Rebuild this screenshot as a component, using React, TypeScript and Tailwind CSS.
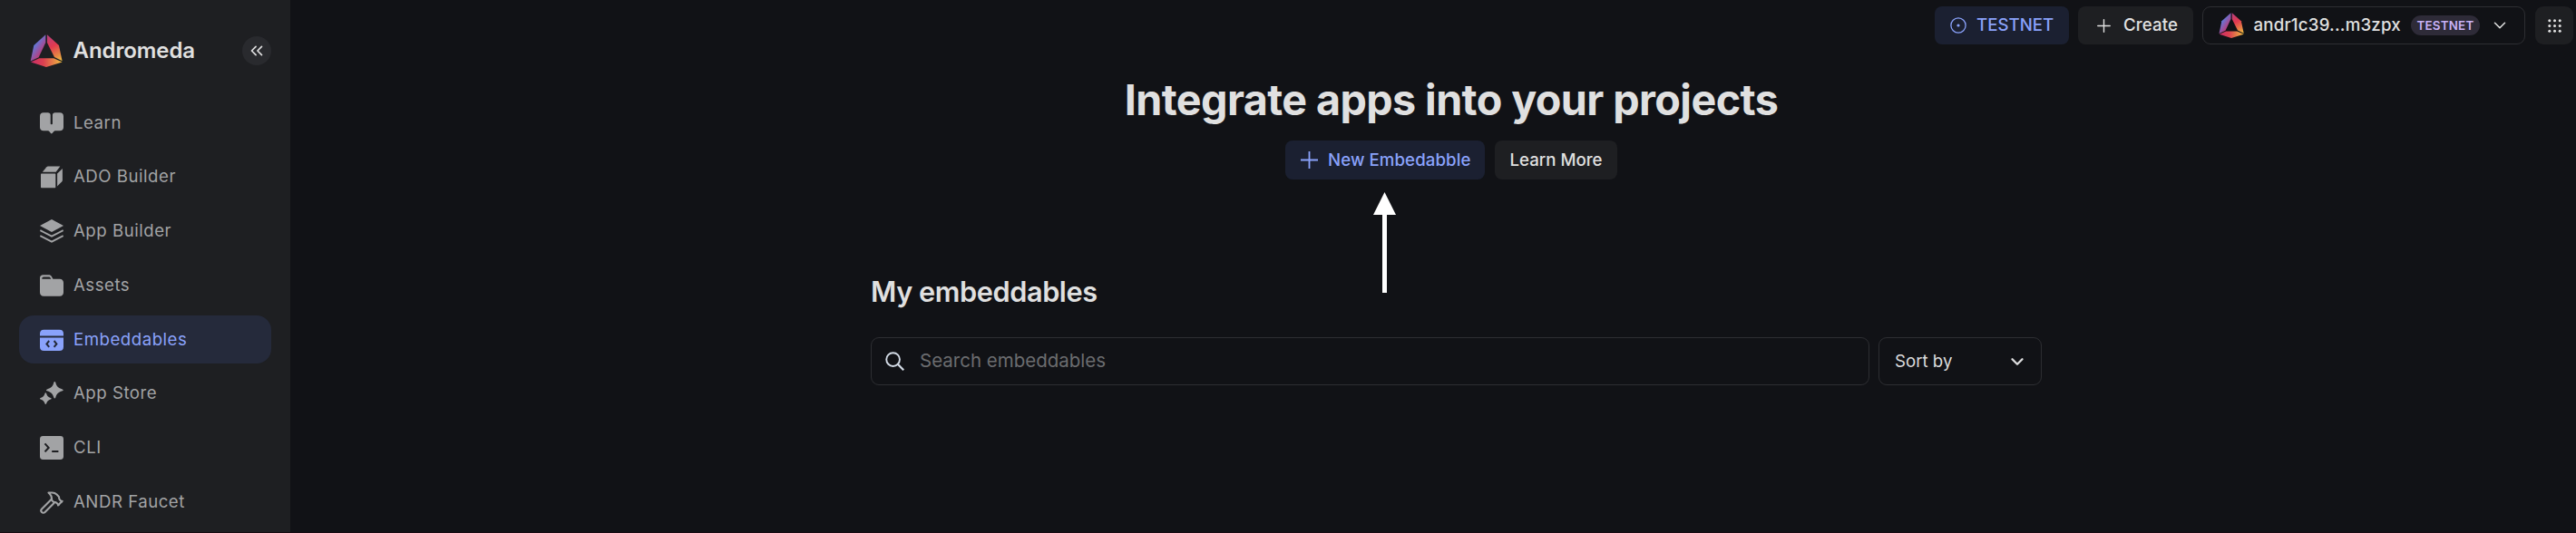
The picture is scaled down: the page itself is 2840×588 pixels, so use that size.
import type { ReactNode } from "react";
import { ChevronDown, ChevronsLeft, Hammer, Plus } from "lucide-react";

function Logo({ className }: { className: string }) {
  return (
    <svg viewBox="99 114 110 110" className={className} aria-hidden="true">
      <defs>
        <linearGradient id="logo-left" gradientUnits="userSpaceOnUse" x1="108" y1="145" x2="146" y2="172">
          <stop offset="0" stopColor="#4f84ea" />
          <stop offset="0.45" stopColor="#8560b4" />
          <stop offset="1" stopColor="#c4356f" />
        </linearGradient>
        <linearGradient id="logo-right" gradientUnits="userSpaceOnUse" x1="156" y1="120" x2="204" y2="202">
          <stop offset="0" stopColor="#b8407c" />
          <stop offset="0.4" stopColor="#e2394f" />
          <stop offset="0.75" stopColor="#e78445" />
          <stop offset="1" stopColor="#eec140" />
        </linearGradient>
        <linearGradient id="logo-bottom" gradientUnits="userSpaceOnUse" x1="103" y1="204" x2="205" y2="204">
          <stop offset="0" stopColor="#c92d68" />
          <stop offset="0.4" stopColor="#dc4050" />
          <stop offset="1" stopColor="#eebb40" />
        </linearGradient>
      </defs>
      <path d="M151 115V141L128 190L101 203L112 150Z" fill="url(#logo-left)" />
      <path d="M156 115L195 150L206 202L180 189L156 141Z" fill="url(#logo-right)" />
      <path d="M102 206L130 193H178L206 206L153 222Z" fill="url(#logo-bottom)" />
    </svg>
  );
}

function Glyph({ children }: { children: ReactNode }) {
  return (
    <svg viewBox="0 0 26 26" className="size-[26px] shrink-0" fill="currentColor" aria-hidden="true">
      {children}
    </svg>
  );
}

const menu: { label: string; icon: ReactNode; active?: boolean }[] = [
  {
    label: "Learn",
    icon: (
      <Glyph>
        <path d="M4 1.3H8.8C10.5 1.3 11.7 2.4 11.7 4V13.2C11.7 14.6 13.9 14.6 13.9 13.2V4C13.9 2.4 15.1 1.3 16.8 1.3H22C24.5 1.3 26 2.8 26 5.2V17.4C26 19.8 24.5 21.2 22 21.2H17C16.2 21.2 15.9 21.5 15.4 22L13.6 24.1C13.1 24.7 12.5 24.7 12 24.1L10.3 22C9.8 21.5 9.5 21.2 8.7 21.2H4C1.5 21.2 0 19.8 0 17.4V5.2C0 2.8 1.5 1.3 4 1.3Z" />
      </Glyph>
    ),
  },
  {
    label: "ADO Builder",
    icon: (
      <Glyph>
        <path d="M2 9.6H16.3C17 9.6 17.3 9.9 17.3 10.6V24.3C17.3 25 17 25.3 16.3 25.3H2C1.3 25.3 1 25 1 24.3V10.6C1 9.9 1.3 9.6 2 9.6Z" />
        <path d="M2.8 7.7L7.4 2.3C7.9 1.8 8.2 1.6 8.9 1.6H22.3L17.6 7.7Z" />
        <path d="M19.1 9.6L24.9 4.1V16.8C24.9 17.4 24.7 17.8 24.3 18.2L19.1 23.4Z" />
      </Glyph>
    ),
  },
  {
    label: "App Builder",
    icon: (
      <Glyph>
        <path d="M13 0L26 7L13 14L0 7Z" />
        <path d="M0.3 12.2L13 18.7L25.7 12.2M0.3 18.2L13 24.7L25.7 18.2" fill="none" stroke="currentColor" strokeWidth="1.9" />
      </Glyph>
    ),
  },
  {
    label: "Assets",
    icon: (
      <Glyph>
        <path
          fillRule="evenodd"
          d="M3.6 1.2H9.6C11.2 1.2 12.2 1.8 13 3.2L14.4 5.8H21.8C24.5 5.8 26 7.4 26 10V20.6C26 23.3 24.5 24.8 21.8 24.8H4.2C1.5 24.8 0 23.3 0 20.6V4.8C0 2.5 1.3 1.2 3.6 1.2ZM4.2 3.5C3 3.5 2.3 4.2 2.3 5.8H12.4L11.5 4.4C11.1 3.7 10.7 3.5 10 3.5Z"
        />
      </Glyph>
    ),
  },
  {
    label: "Embeddables",
    active: true,
    icon: (
      <Glyph>
        <path d="M4.4 1.7H21.6C24.5 1.7 26 3.2 26 6V8.4H0V6C0 3.2 1.5 1.7 4.4 1.7Z" />
        <path d="M0 10.4H26V20.8C26 23.6 24.5 25.1 21.6 25.1H4.4C1.5 25.1 0 23.6 0 20.8Z" />
        <path d="M10.2 14L7.4 17.4L10.2 20.8M15.6 14L18.4 17.4L15.6 20.8" fill="none" stroke="#252a3b" strokeWidth="2" />
      </Glyph>
    ),
  },
  {
    label: "App Store",
    icon: (
      <Glyph>
        <path d="M16.3 0C16.9 0 17.1 0.4 17.3 1C18.3 5 20 7 24.8 8.4C26 8.8 26 9.8 24.8 10.2C20 11.6 18.3 13.6 17.3 17.6C16.9 18.9 15.7 18.9 15.3 17.6C14.3 13.6 12.6 11.6 7.9 10.2C6.7 9.8 6.7 8.8 7.9 8.4C12.6 7 14.3 5 15.3 1C15.5 0.4 15.7 0 16.3 0Z" />
        <path d="M6.3 12.3C6.8 12.3 7 12.6 7.2 13.2C7.9 15.8 9.2 17.1 11.9 17.9C12.9 18.2 12.9 19.1 11.9 19.4C9.2 20.2 7.9 21.5 7.2 24.1C6.8 25.3 5.8 25.3 5.4 24.1C4.7 21.5 3.4 20.2 0.7 19.4C-0.2 19.1 -0.2 18.2 0.7 17.9C3.4 17.1 4.7 15.8 5.4 13.2C5.6 12.6 5.8 12.3 6.3 12.3Z" />
      </Glyph>
    ),
  },
  {
    label: "CLI",
    icon: (
      <Glyph>
        <rect width="26" height="26" rx="3.4" />
        <path d="M5.5 8.4L9.6 12.9L5.5 17.4M13.2 17H20.4" fill="none" stroke="#1e1f22" strokeWidth="2.1" />
      </Glyph>
    ),
  },
  {
    label: "ANDR Faucet",
    icon: <Hammer className="-m-px size-[28px] shrink-0" strokeWidth={1.8} />,
  },
];

function Sidebar() {
  return (
    <aside className="flex w-[320px] shrink-0 flex-col bg-[#1e1f22] px-[21px] pt-[38px]">
      <div className="flex h-[36px] items-center pl-[12px]">
        <Logo className="size-[36.6px] shrink-0" />
        <span className="ml-[11px] text-[24px] font-semibold tracking-[-0.1px] text-[#e0e0e0]">Andromeda</span>
        <button className="ml-auto flex size-[32px] items-center justify-center rounded-full bg-[#292a2e] text-[#dcdcdd]">
          <ChevronsLeft className="size-[22px]" strokeWidth={1.9} />
        </button>
      </div>
      <nav className="mt-[35px] flex flex-col gap-[6.75px]">
        {menu.map(({ label, icon, active }) => (
          <a
            key={label}
            className={
              active
                ? "flex h-[53px] items-center gap-[11px] rounded-[16px] bg-[#252a3b] pl-[23px] text-[#8aa2fb]"
                : "flex h-[53px] items-center gap-[11px] rounded-[16px] pl-[23px] text-[#a2a3a5]"
            }
          >
            {icon}
            <span className="text-[18.67px] tracking-[0.5px]">{label}</span>
          </a>
        ))}
      </nav>
    </aside>
  );
}

function TopBar() {
  return (
    <header className="flex h-[42px] justify-end gap-[10px] pr-[3px] text-[18.67px] font-medium text-[#e0e0e0]">
      <button className="flex w-[148px] items-center rounded-[8px] bg-[#1b2031] pl-[17px] text-[#8aa2fb]">
        <svg viewBox="0 0 18 18" className="mr-[11px] size-[18px]" aria-hidden="true">
          <circle cx="9" cy="9" r="8.1" fill="none" stroke="currentColor" strokeWidth="1.3" />
          <circle cx="9" cy="9" r="1.6" fill="currentColor" />
        </svg>
        TESTNET
      </button>
      <button className="flex w-[127px] items-center rounded-[8px] bg-[#1e1f22] pl-[17px] tracking-[0.1px]">
        <Plus className="mr-[10px] size-[23px]" strokeWidth={1.5} />
        Create
      </button>
      <button className="flex w-[356px] items-center rounded-[9px] border border-[#2d2e32] pl-[17px]">
        <Logo className="size-[28.5px] shrink-0" />
        <span className="ml-[10px] tracking-[0.2px]">andr1c39...m3zpx</span>
        <span className="ml-[11px] flex h-[22px] w-[76px] items-center justify-center rounded-full bg-[#2e2b38] text-[13.4px] font-semibold tracking-[0.2px] text-[#c8b1f6]">
          TESTNET
        </span>
        <ChevronDown className="ml-[11px] size-[22px]" strokeWidth={1.7} />
      </button>
      <button className="ml-px flex size-[42px] items-center justify-center rounded-[9px] bg-[#1e1f22]">
        <svg viewBox="0 0 15 15" className="size-[15px]" fill="currentColor" aria-hidden="true">
          {[1.8, 7.5, 13.2].map((y) => [1.8, 7.5, 13.2].map((x) => <circle key={`${x}-${y}`} cx={x} cy={y} r="1.5" />))}
        </svg>
      </button>
    </header>
  );
}

export default function App() {
  return (
    <div className="flex h-[588px] w-[2840px] flex-col overflow-hidden bg-[#111216] font-['Inter',sans-serif] antialiased">
      <div className="flex min-h-0 flex-1">
        <Sidebar />
        <main className="flex flex-1 flex-col pt-[7px]">
          <TopBar />
          <div className="ml-[640px] w-[1291px]">
            <section className="flex flex-col items-center pt-[33px] pr-[11px]">
              <h1 className="text-[46.67px] leading-[56px] font-bold tracking-[-0.58px] whitespace-nowrap text-[#e0e0e0]">
                Integrate apps into your projects
              </h1>
              <div className="relative mt-[17px] flex h-[43px] gap-[11px] text-[18.67px] font-medium">
                <button className="flex w-[220px] items-center rounded-[8px] bg-[#1b2031] pl-[17px] tracking-[0.08px] text-[#8aa2fb]">
                  <svg viewBox="0 0 19 19" className="mr-[11px] size-[19px] shrink-0" aria-hidden="true">
                    <path d="M9.5 0V19M0 9.5H19" stroke="currentColor" strokeWidth="1.8" />
                  </svg>
                  New Embedabble
                </button>
                <button className="flex w-[135px] items-center justify-center rounded-[8px] bg-[#1e1f22] text-[#e0e0e0]">
                  Learn More
                </button>
                <svg
                  viewBox="0 0 25 111"
                  className="absolute top-[57px] left-[97px] h-[111px] w-[25px]"
                  fill="#ffffff"
                  aria-hidden="true"
                >
                  <path d="M12.5 0L25 25H15V111H10V25H0Z" />
                </svg>
              </div>
            </section>
            <h2 className="mt-[104px] text-[30.67px] leading-[40px] font-semibold tracking-[-0.4px] text-[#e0e0e0]">
              My embeddables
            </h2>
            <div className="mt-[30px] flex h-[53px] gap-[10px]">
              <div className="flex w-[1101px] items-center rounded-[9px] border border-[#2d2e32] pl-[15px]">
                <svg viewBox="0 0 22 22" className="mr-[17px] size-[21px]" fill="none" stroke="#d3dbe6" aria-hidden="true">
                  <circle cx="9" cy="9" r="7.7" strokeWidth="2" />
                  <path d="M14.4 14.4L21.2 21.2" strokeWidth="2.4" />
                </svg>
                <span className="text-[20.5px] text-[#6b6c6f]">Search embeddables</span>
              </div>
              <button className="flex w-[180px] items-center justify-between rounded-[9px] border border-[#2d2e32] pr-[15px] pl-[17px] text-[18.67px] text-[#dcdcdd]">
                Sort by
                <ChevronDown className="size-[22px]" strokeWidth={2.6} />
              </button>
            </div>
          </div>
        </main>
      </div>
      <div className="h-px shrink-0 bg-[#170b12]" />
    </div>
  );
}
